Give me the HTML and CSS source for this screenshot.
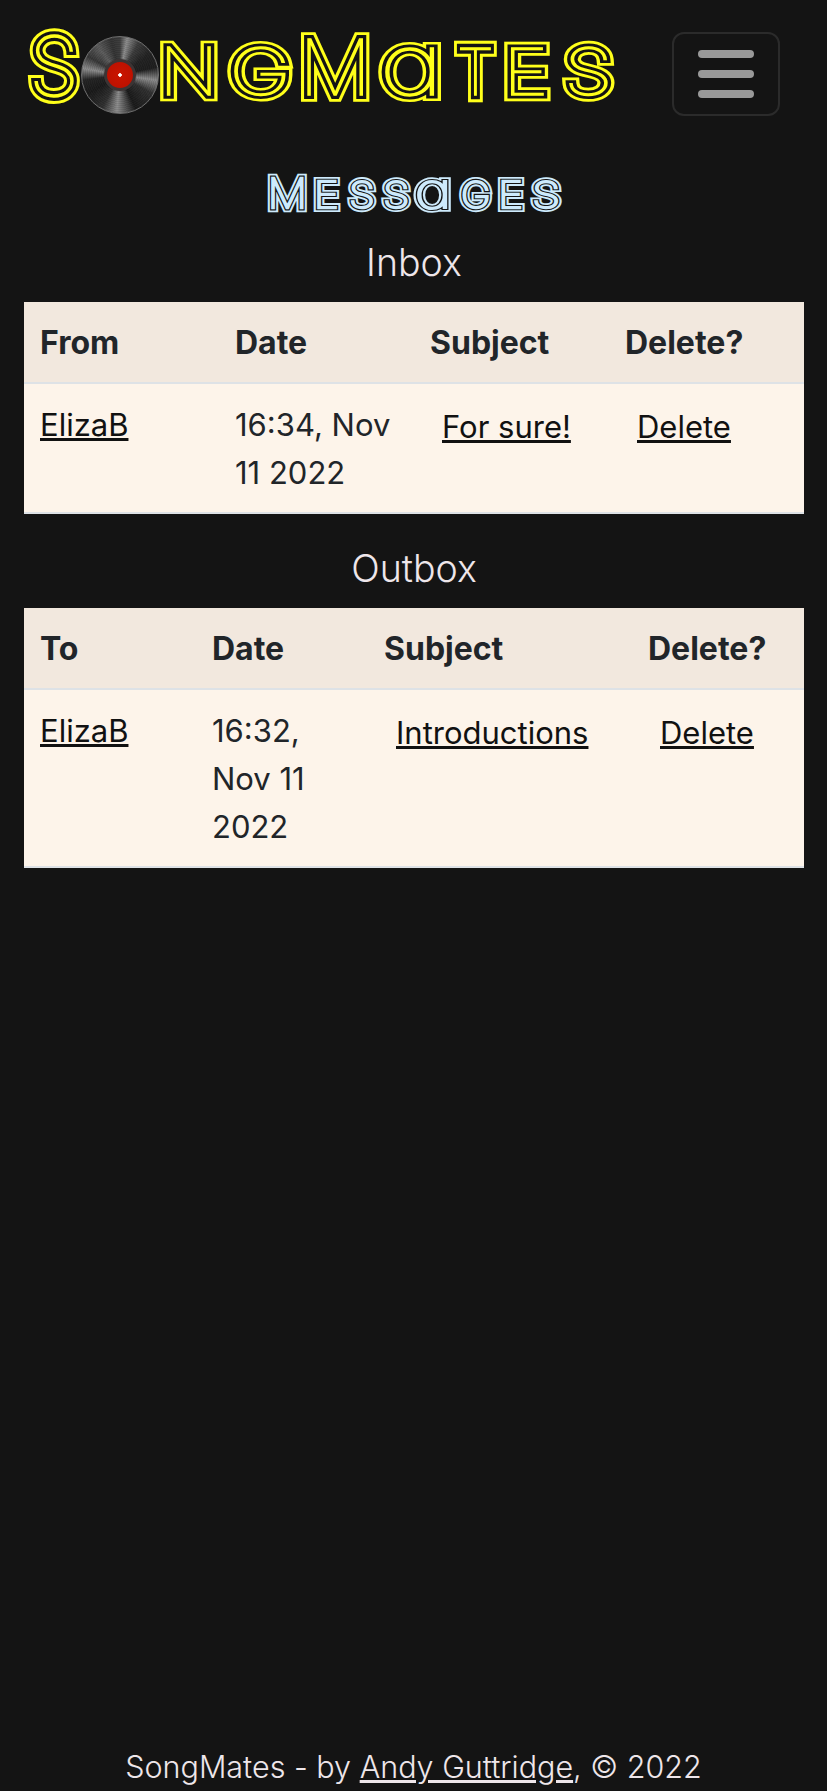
FILE: index.html
```html
<!DOCTYPE html>
<html lang="en">
<head>
<meta charset="utf-8">
<title>SongMates - Messages</title>
<link rel="stylesheet" href="styles.css">
</head>
<body>
<header class="site-header">
  <a class="brand" href="#" aria-label="SongMates">
    <svg class="brand-svg" viewBox="0 0 620 116" width="620" height="116">
      <use href="#logo-word" class="ly ly-out"></use>
      <use href="#logo-word" class="ly ly-gap"></use>
      <g class="ly ly-in">
        <g id="logo-word" class="logo-word">
          <text class="big" transform="translate(29 96)">S</text>
          <text class="small hole" transform="translate(100 96)">o</text>
          <text class="small" transform="translate(159 95) scale(1.19 1)">N</text>
          <text class="small" transform="translate(229 95) scale(1.3 1)">G</text>
          <text class="mid" transform="translate(299 95) scale(1.05 1)">M</text>
          <text class="round" transform="translate(379 95) scale(1.3 1)">a</text>
          <text class="small" transform="translate(457 95) scale(.92 1)">T</text>
          <text class="small" transform="translate(503 95) scale(1.2 1)">E</text>
          <text class="small" transform="translate(564 95) scale(1.23 1)">S</text>
        </g>
      </g>
    </svg>
    <span class="disc"><span class="disc-label"></span></span>
  </a>
  <button class="toggler" type="button" aria-label="Toggle navigation">
    <span class="bar"></span><span class="bar"></span><span class="bar"></span>
  </button>
</header>
<main class="content">
  <h1 class="page-title">
    <svg class="title-svg" viewBox="0 0 300 46" width="300" height="46">
      <use href="#title-word" class="ty ty-out"></use>
      <use href="#title-word" class="ty ty-gap"></use>
      <g class="ty ty-in">
        <g id="title-word" class="title-word">
          <text class="t-mid" transform="translate(3.6 43.5) scale(1.08 1)">M</text>
          <text class="t-small" transform="translate(49.8 43.5) scale(1.18 1)">E</text>
          <text class="t-small" transform="translate(85 43.5) scale(1.17 1)">S</text>
          <text class="t-small" transform="translate(119 43.5) scale(1.2 1)">S</text>
          <text class="t-round" transform="translate(150.5 43.5) scale(1.34 1)">a</text>
          <text class="t-small" transform="translate(197 43.5) scale(1.11 1)">G</text>
          <text class="t-small" transform="translate(234 43.5) scale(1.18 1)">E</text>
          <text class="t-small" transform="translate(268 43.5) scale(1.28 1)">S</text>
        </g>
      </g>
    </svg>
  </h1>
  <h2 class="box-title">Inbox</h2>
  <table class="msg-table">
    <colgroup><col class="c195"><col class="c195"><col class="c195"><col class="c195"></colgroup>
    <thead><tr><th>From</th><th>Date</th><th>Subject</th><th>Delete?</th></tr></thead>
    <tbody><tr>
      <td><a href="#">ElizaB</a></td>
      <td>16:34, Nov 11 2022</td>
      <td><a class="cell-link" href="#">For sure!</a></td>
      <td><a class="cell-link" href="#">Delete</a></td>
    </tr></tbody>
  </table>
  <h2 class="box-title box-title-second">Outbox</h2>
  <table class="msg-table">
    <colgroup><col class="c172"><col class="c172"><col class="c264"><col class="c172"></colgroup>
    <thead><tr><th>To</th><th>Date</th><th>Subject</th><th>Delete?</th></tr></thead>
    <tbody><tr>
      <td><a href="#">ElizaB</a></td>
      <td>16:32, Nov 11 2022</td>
      <td><a class="cell-link" href="#">Introductions</a></td>
      <td><a class="cell-link" href="#">Delete</a></td>
    </tr></tbody>
  </table>
</main>
<footer class="site-footer">SongMates - by <a href="#">Andy Guttridge</a>, © 2022</footer>
</body>
</html>
```
FILE: styles.css
```css
* { box-sizing: border-box; }
html, body { margin: 0; height: 100%; overflow: hidden; }
body {
  display: flex;
  flex-direction: column;
  background: #141414;
  color: #eee6ea;
  font-family: Inter, "Liberation Sans", sans-serif;
  font-size: 32px;
  line-height: 1.5;
}
.site-header {
  display: flex;
  align-items: flex-start;
  padding: 0 47px 0 0;
  height: 156px;
  justify-content: space-between;
}
.brand { display: block; position: relative; width: 620px; height: 116px; }
.brand-svg { display: block; overflow: visible; }
.logo-word text, .title-word text {
  font-family: Inter, "Liberation Sans", sans-serif;
  font-weight: 100;
  font-feature-settings: "cv11" 1;
  vector-effect: non-scaling-stroke;
}
.logo-word .big { font-size: 82px; }
.logo-word .mid { font-size: 77px; }
.logo-word .small { font-size: 65px; }
.logo-word .round { font-size: 86px; }
.logo-word .hole { fill: none; stroke: none; }
.ly, .ty { stroke-linejoin: miter; stroke-miterlimit: 2; }
.ly-out { fill: #ffff1a; stroke: #ffff1a; stroke-width: 14px; }
.ly-gap { fill: #141414; stroke: #141414; stroke-width: 8px; }
.ly-in { fill: #ffff1a; stroke: #ffff1a; stroke-width: 1.6px; }
.disc {
  position: absolute;
  left: 81px;
  top: 36px;
  width: 78px;
  height: 78px;
  border-radius: 50%;
  display: flex;
  align-items: center;
  justify-content: center;
  border: 1.5px solid #6e6e6e;
  background:
    repeating-radial-gradient(circle, rgba(0,0,0,.07) 0 1px, rgba(255,255,255,.015) 1px 2px),
    conic-gradient(from 0deg, #3c3c3c 0deg, #8c8c8c 11deg, #3c3c3c 30deg, #222 55deg, #1e1e1e 78deg, #8c8c8c 98deg, #303030 120deg, #1a1a1a 155deg, #8c8c8c 185deg, #303030 208deg, #1a1a1a 240deg, #242424 262deg, #8c8c8c 280deg, #363636 300deg, #5c5c5c 322deg, #333 345deg, #3c3c3c 360deg);
}
.disc-label {
  width: 32px;
  height: 32px;
  border-radius: 50%;
  border: 3px solid #3c3434;
  background: radial-gradient(circle, #fff 0 1.5px, #c81400 2px, #b81000 100%);
}
.toggler {
  display: flex;
  flex-direction: column;
  align-items: center;
  justify-content: center;
  gap: 12px;
  width: 108px;
  height: 84px;
  margin-top: 32px;
  padding: 0;
  background: transparent;
  border: 2px solid #2b2b2b;
  border-radius: 12px;
}
.bar { display: block; width: 56px; height: 8px; border-radius: 4px; background: #999; }
.content { flex: 1; padding: 0 23px 0 24px; }
.page-title { display: flex; justify-content: center; margin: 0; height: 66px; padding-top: 8px; }
.title-svg { display: block; overflow: visible; }
.title-word .t-mid { font-size: 41px; }
.title-word .t-small { font-size: 36px; }
.title-word .t-round { font-size: 48px; }
.ty-out { fill: #cdeafc; stroke: #cdeafc; stroke-width: 9px; }
.ty-gap { fill: #141414; stroke: #141414; stroke-width: 5px; }
.ty-in { fill: #cdeafc; stroke: #cdeafc; stroke-width: 2.6px; }
.box-title {
  margin: 0;
  height: 80px;
  padding-top: 14px;
  text-align: center;
  font-size: 37.5px;
  font-weight: 300;
  line-height: 54px;
}
.box-title-second { height: 94px; padding-top: 28px; }
.msg-table {
  width: 780px;
  table-layout: fixed;
  border-collapse: collapse;
  background: #fdf4ea;
  color: #212529;
}
.c195 { width: 195px; }
.c172 { width: 172px; }
.c264 { width: 264px; }
.msg-table th {
  padding: 17px 16px 15px;
  background: #f2e8de;
  text-align: left;
  font-weight: 700;
  height: 80px;
  border-bottom: 2px solid #dee2e6;
}
.msg-table td {
  padding: 17px 16px 15px;
  vertical-align: top;
  font-size: 31px;
  line-height: 48px;
  border-bottom: 2px solid #dee2e6;
}
.msg-table a { color: #111; text-decoration: underline; }
.cell-link { display: inline-block; padding: 2px 12px 0; }
.site-footer { text-align: center; font-weight: 300; font-size: 30.5px; line-height: 48px; margin-bottom: 0; }
.site-footer a { color: inherit; }
```
